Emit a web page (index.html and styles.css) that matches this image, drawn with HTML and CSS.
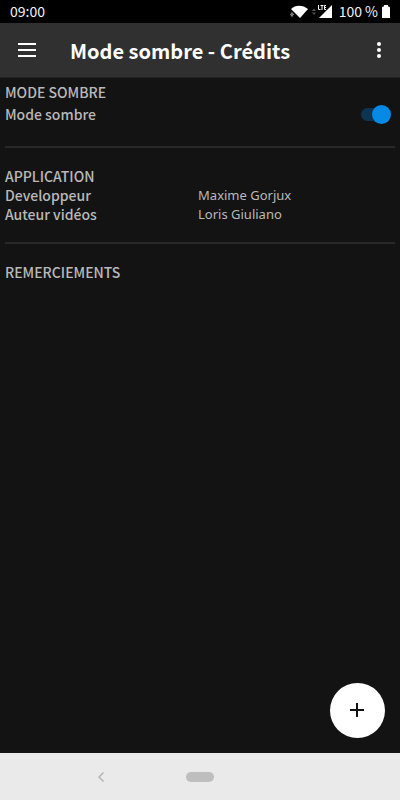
FILE: index.html
```html
<!DOCTYPE html>
<html lang="fr">

<head>
    <meta charset="UTF-8">
    <meta name="viewport" content="width=device-width, initial-scale=1.0">
    <title>Mode sombre - Crédits</title>
    <link rel="stylesheet" href="styles.css">
</head>

<body>
    <div class="statut">
        <span class="heure">09:00</span>
        <svg width="18" height="14" viewBox="0 0 18 14" aria-hidden="true">
            <path d="M1 4C5-.5 13-.5 18 4L10 13Z" fill="#fff" />
            <path d="M-.5 9.500L2 6l2.500 3.500L2 13z" fill="#777" stroke="#000" />
        </svg>
        <svg class="reseau" width="20" height="15" viewBox="0 0 20 15" aria-hidden="true">
            <path d="M20 1v13H7z" fill="#fff" />
            <path d="M5 0h9v6l-2 1H5z" fill="#000" />
            <path d="M6.500 1v4.500h2M8.500 1.500h3M10 1v5M14 1.500h-1.500v4H14M12.500 3.500H14" fill="none" stroke="#fff" />
            <path d="M0 7l2-2.500L4 7zM0 8.500h4L2 11z" fill="#555" />
        </svg>
        <span class="batterie-texte">100 %</span>
        <svg width="8" height="13" viewBox="0 0 8 13" aria-hidden="true">
            <path d="M0 2.500L1 1.500H2V0h4v1.500h1l1 1V13H0z" fill="#fff" />
        </svg>
    </div>

    <header class="barre">
        <button class="bouton-icone" aria-label="Menu">
            <svg width="18" height="14" viewBox="0 0 18 14">
                <path d="M0 1h18M0 7h18M0 13h18" stroke="#fff" stroke-width="2" />
            </svg>
        </button>
        <h1>Mode sombre - Crédits</h1>
        <button class="bouton-icone options" aria-label="Options">
            <svg width="4" height="16" viewBox="0 0 4 16">
                <circle cx="2" cy="2" r="2" fill="#fff" />
                <circle cx="2" cy="8" r="2" fill="#fff" />
                <circle cx="2" cy="14" r="2" fill="#fff" />
            </svg>
        </button>
    </header>

    <main class="contenu">
        <section class="reglage">
            <h2>MODE SOMBRE</h2>
            <div class="ligne-switch">
                <label for="sombre">Mode sombre</label>
                <input class="switch" type="checkbox" id="sombre" checked>
            </div>
        </section>

        <section>
            <h2>APPLICATION</h2>
            <dl class="credits">
                <dt>Developpeur</dt>
                <dd>Maxime Gorjux</dd>
                <dt>Auteur vidéos</dt>
                <dd>Loris Giuliano</dd>
            </dl>
        </section>

        <section>
            <h2>REMERCIEMENTS</h2>
        </section>

        <button class="ajouter" aria-label="Ajouter">
            <svg width="15" height="15" viewBox="0 0 15 15">
                <path d="M7 0v14M0 7h14" stroke="#111" stroke-width="2" />
            </svg>
        </button>
    </main>

    <nav class="navigation">
        <button class="retour" aria-label="Retour">
            <svg width="6" height="10" viewBox="0 0 6 10">
                <path d="M5.500.5L1 5l4.500 4.500" fill="none" stroke="#b4b4b4" stroke-width="1.500" />
            </svg>
        </button>
        <button class="accueil" aria-label="Accueil"></button>
    </nav>
</body>

</html>
```

FILE: styles.css
```css
* {
    box-sizing: border-box;
}

body {
    margin: 0;
    min-height: 100vh;
    display: flex;
    flex-direction: column;
    background-color: #131313;
    color: #b9b9b9;
    font-family: 'Noto Sans CJK JP', 'Noto Sans', sans-serif;
    font-size: 14px;
    line-height: 19px;
}

h1,
h2,
dl,
dd {
    margin: 0;
}

button {
    padding: 0;
    border: none;
    background: none;
    cursor: pointer;
}

svg {
    display: block;
}

/* Barre de statut */
.statut {
    display: flex;
    align-items: center;
    height: 23px;
    padding: 0 10px;
    background-color: #000;
    color: #f2f2f2;
}

.heure {
    flex: 1;
}

.reseau {
    margin-left: 4px;
}

.batterie-texte {
    margin: 0 4px 0 7px;
}

/* Barre du haut */
.barre {
    display: flex;
    align-items: center;
    height: 55px;
    padding: 0 8px;
    background-color: #303030;
    border-bottom: 1px solid #222;
}

.bouton-icone {
    display: flex;
    align-items: center;
    justify-content: center;
    width: 38px;
    height: 38px;
}

.options {
    width: 26px;
}

h1 {
    flex: 1;
    padding: 2px 0 0 24px;
    color: #fff;
    font-size: 20px;
    font-weight: 700;
    line-height: 28px;
}

/* Contenu */
.contenu {
    position: relative;
    flex: 1;
    padding: 5px;
}

section + section {
    margin-top: 18px;
    padding-top: 19px;
    border-top: 2px solid #292929;
}

h2,
dt,
label {
    font-size: 14px;
    font-weight: 500;
}

.reglage {
    display: grid;
    gap: 3px;
    padding-bottom: 4px;
}

.ligne-switch {
    display: flex;
    justify-content: space-between;
    padding-right: 4px;
}

.switch {
    appearance: none;
    position: relative;
    width: 30px;
    height: 19px;
    margin: 0;
    cursor: pointer;
}

.switch::before {
    content: "";
    position: absolute;
    top: 3px;
    left: 0;
    width: 28px;
    height: 13px;
    border-radius: 7px;
    background-color: #444;
}

.switch::after {
    content: "";
    position: absolute;
    top: 0;
    left: 0;
    width: 19px;
    height: 19px;
    border-radius: 50%;
    background-color: #bbb;
}

.switch:checked::before {
    background-color: #0d3552;
}

.switch:checked::after {
    left: 11px;
    background-color: #068ae6;
}

.credits {
    display: grid;
    grid-template-columns: 49.5% 1fr;
}

dd {
    font-family: 'Noto Sans', sans-serif;
    font-size: 13px;
}

.ajouter {
    position: absolute;
    right: 15px;
    bottom: 15px;
    display: flex;
    align-items: center;
    justify-content: center;
    width: 55px;
    height: 55px;
    border-radius: 50%;
    background-color: #fff;
}

/* Barre de navigation */
.navigation {
    display: grid;
    grid-template-columns: 1fr 28px 1fr;
    align-items: center;
    justify-items: center;
    height: 47px;
    background-color: #eaeaea;
}

.retour {
    padding: 8px;
    margin-left: 16px;
}

.accueil {
    width: 28px;
    height: 10px;
    border-radius: 5px;
    background-color: #bebebe;
}
```
